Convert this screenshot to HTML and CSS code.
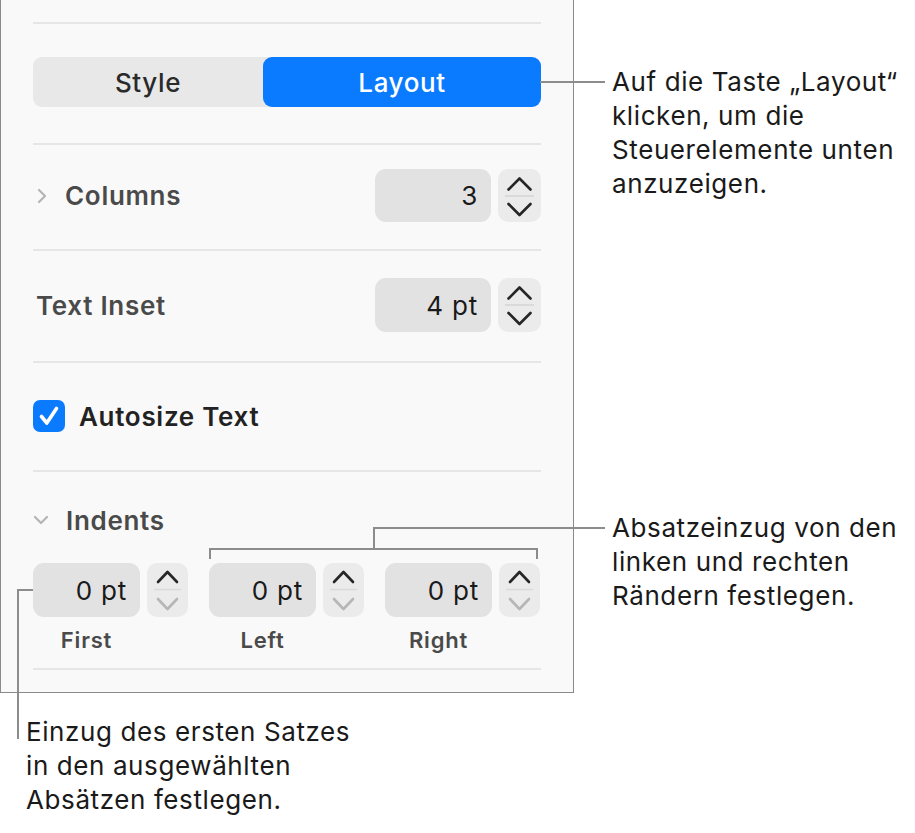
FILE: index.html
```html
<!DOCTYPE html>
<html lang="de">
<head>
<meta charset="utf-8">
<title>Layout inspector</title>
<link rel="stylesheet" href="styles.css">
</head>
<body>
<div class="page">
  <div class="panel">
    <div class="sep sep-top"></div>
    <div class="segmented">
      <div class="seg seg-style">Style</div>
      <div class="seg seg-active">Layout</div>
    </div>
    <div class="sep sep-a"></div>
    <div class="row row-columns">
      <svg class="disclosure" width="10" height="16" viewBox="0 0 10 16"><path d="M2 2 L8 8 L2 14" fill="none" stroke="#b4b4b4" stroke-width="2.2" stroke-linecap="round" stroke-linejoin="round"/></svg>
      <span class="label">Columns</span>
      <div class="spin">
        <div class="field">3</div>
        <div class="stepper">
          <svg width="43" height="53" viewBox="0 0 43 53"><path d="M10.5 20.5 L21.5 9.5 L32.5 20.5" fill="none" stroke="#262626" stroke-width="2.6" stroke-linecap="round" stroke-linejoin="round"/><line x1="7" y1="27" x2="36" y2="27" stroke="#d4d4d4" stroke-width="1.5"/><path d="M10.5 35 L21.5 46 L32.5 35" fill="none" stroke="#262626" stroke-width="2.6" stroke-linecap="round" stroke-linejoin="round"/></svg>
        </div>
      </div>
    </div>
    <div class="sep sep-b"></div>
    <div class="row row-inset">
      <span class="label label-inset">Text Inset</span>
      <div class="spin">
        <div class="field">4 pt</div>
        <div class="stepper">
          <svg width="43" height="54" viewBox="0 0 43 54"><path d="M10.5 20.5 L21.5 9.5 L32.5 20.5" fill="none" stroke="#262626" stroke-width="2.6" stroke-linecap="round" stroke-linejoin="round"/><line x1="7" y1="27" x2="36" y2="27" stroke="#d4d4d4" stroke-width="1.5"/><path d="M10.5 35 L21.5 46 L32.5 35" fill="none" stroke="#262626" stroke-width="2.6" stroke-linecap="round" stroke-linejoin="round"/></svg>
        </div>
      </div>
    </div>
    <div class="sep sep-c"></div>
    <div class="row row-check">
      <span class="checkbox">
        <svg width="32" height="32" viewBox="0 0 32 32"><path d="M8.5 16.5 L13.8 23 L23.5 8.5" fill="none" stroke="#fff" stroke-width="3.6" stroke-linecap="round" stroke-linejoin="round"/></svg>
      </span>
      <span class="label label-strong">Autosize Text</span>
    </div>
    <div class="sep sep-d"></div>
    <div class="indents-head">
      <svg class="disclosure-down" width="16" height="10" viewBox="0 0 16 10"><path d="M2 2 L8 8 L14 2" fill="none" stroke="#b4b4b4" stroke-width="2.2" stroke-linecap="round" stroke-linejoin="round"/></svg>
      <span class="label">Indents</span>
    </div>
    <div class="indents">
      <div class="indent">
        <div class="spin spin-small">
          <div class="field field-small">0 pt</div>
          <div class="stepper stepper-small">
            <svg width="41" height="54" viewBox="0 0 41 54"><path d="M11 19 L20.5 9 L30 19" fill="none" stroke="#262626" stroke-width="2.6" stroke-linecap="round" stroke-linejoin="round"/><line x1="7" y1="26.5" x2="34" y2="26.5" stroke="#dadada" stroke-width="1.5"/><path d="M11 36 L20.5 46 L30 36" fill="none" stroke="#b6b6b6" stroke-width="2.6" stroke-linecap="round" stroke-linejoin="round"/></svg>
          </div>
        </div>
        <div class="indent-label">First</div>
      </div>
      <div class="indent">
        <div class="spin spin-small">
          <div class="field field-small">0 pt</div>
          <div class="stepper stepper-small">
            <svg width="41" height="54" viewBox="0 0 41 54"><path d="M11 19 L20.5 9 L30 19" fill="none" stroke="#262626" stroke-width="2.6" stroke-linecap="round" stroke-linejoin="round"/><line x1="7" y1="26.5" x2="34" y2="26.5" stroke="#dadada" stroke-width="1.5"/><path d="M11 36 L20.5 46 L30 36" fill="none" stroke="#b6b6b6" stroke-width="2.6" stroke-linecap="round" stroke-linejoin="round"/></svg>
          </div>
        </div>
        <div class="indent-label">Left</div>
      </div>
      <div class="indent">
        <div class="spin spin-small">
          <div class="field field-small">0 pt</div>
          <div class="stepper stepper-small">
            <svg width="41" height="54" viewBox="0 0 41 54"><path d="M11 19 L20.5 9 L30 19" fill="none" stroke="#262626" stroke-width="2.6" stroke-linecap="round" stroke-linejoin="round"/><line x1="7" y1="26.5" x2="34" y2="26.5" stroke="#dadada" stroke-width="1.5"/><path d="M11 36 L20.5 46 L30 36" fill="none" stroke="#b6b6b6" stroke-width="2.6" stroke-linecap="round" stroke-linejoin="round"/></svg>
          </div>
        </div>
        <div class="indent-label">Right</div>
      </div>
    </div>
    <div class="sep sep-e"></div>
  </div>

  <svg class="leaders" width="915" height="833" viewBox="0 0 915 833">
    <g fill="none" stroke="#8c8c8c" stroke-width="2">
      <path d="M540 82 H605"/>
      <path d="M210 559 V549 H537 V559"/>
      <path d="M374 549 V528 H605"/>
      <path d="M33 590 H18 V739"/>
    </g>
  </svg>

  <p class="note note-layout">Auf die Taste „Layout“<br>klicken, um die<br>Steuerelemente unten<br>anzuzeigen.</p>
  <p class="note note-margins">Absatzeinzug von den<br>linken und rechten<br>Rändern festlegen.</p>
  <p class="note note-first">Einzug des ersten Satzes<br>in den ausgewählten<br>Absätzen festlegen.</p>
</div>
</body>
</html>
```
FILE: styles.css
```css
* { box-sizing: border-box; }

html, body {
  margin: 0;
  padding: 0;
  background: #ffffff;
}

body {
  font-family: Inter, "Noto Sans", "Liberation Sans", sans-serif;
  color: #1d1d1f;
}

.page {
  position: relative;
  width: 915px;
  height: 833px;
  overflow: hidden;
}

.panel {
  width: 574px;
  height: 693px;
  background: #f9f9f9;
  border-left: 1px solid #8a8a8a;
  border-right: 1px solid #8a8a8a;
  border-bottom: 1px solid #8a8a8a;
  padding: 0 32px;
  display: flex;
  flex-direction: column;
}

.sep {
  height: 2px;
  background: #e6e6e6;
  flex: none;
}
.sep-top { margin-top: 22px; }
.sep-a { margin-top: 36px; }
.sep-b { margin-top: 27px; }
.sep-c { margin-top: 29px; }
.sep-d { margin-top: 38px; }
.sep-e { margin-top: 16px; }

/* segmented control */
.segmented {
  margin-top: 33px;
  height: 50px;
  display: flex;
  background: #e8e8e8;
  border-radius: 9px;
}
.seg {
  display: flex;
  align-items: center;
  justify-content: center;
  font-size: 26px;
  letter-spacing: 0.6px;
  font-weight: 500;
  color: #2a2a2a;
}
.seg-style { width: 230px; }
.seg-active {
  flex: 1;
  background: #0a7aff;
  color: #ffffff;
  border-radius: 9px;
}

/* rows */
.row {
  display: flex;
  align-items: center;
}
.row-columns { margin-top: 24px; height: 53px; }
.row-inset { margin-top: 27px; height: 54px; }
.row-check { margin-top: 37px; height: 32px; }

.label {
  font-size: 26px;
  letter-spacing: 0.7px;
  font-weight: 600;
  color: #4a4a4a;
}
.label-inset { margin-left: 3px; }
.label-strong { color: #222222; margin-left: 14px; }

.disclosure { margin-left: 4px; margin-right: 18px; flex: none; }
.disclosure-down { margin-left: 0; margin-right: 17px; flex: none; }

.spin {
  margin-left: auto;
  display: flex;
  gap: 7px;
  height: 100%;
}
.field {
  width: 116px;
  height: 100%;
  background: #e2e2e2;
  border-radius: 11px;
  display: flex;
  align-items: center;
  justify-content: flex-end;
  padding-right: 13px;
  font-size: 26px;
  letter-spacing: 0.8px;
  color: #1a1a1a;
}
.stepper {
  width: 43px;
  height: 100%;
  background: #ebebeb;
  border-radius: 10px;
}
.stepper svg { display: block; }

.checkbox {
  width: 32px;
  height: 32px;
  border-radius: 7px;
  background: #0a7aff;
  flex: none;
}
.checkbox svg { display: block; }

/* indents */
.indents-head {
  margin-top: 33px;
  height: 30px;
  display: flex;
  align-items: center;
}
.indents {
  margin-top: 28px;
  display: flex;
  gap: 21px;
}
.indent {
  display: flex;
  flex-direction: column;
  width: 155px;
}
.spin-small {
  margin-left: 0;
  height: 54px;
}
.field-small { width: 107px; }
.stepper-small { width: 41px; }
.indent-label {
  width: 107px;
  margin-top: 11px;
  height: 24px;
  line-height: 24px;
  text-align: center;
  font-size: 22px;
  letter-spacing: 0.8px;
  font-weight: 600;
  color: #4a4a4a;
}

/* annotations */
.leaders {
  position: absolute;
  left: 0;
  top: 0;
  pointer-events: none;
}

.note {
  position: absolute;
  margin: 0;
  font-size: 26px;
  line-height: 34px;
  letter-spacing: 0.6px;
  color: #1a1a1a;
  white-space: nowrap;
}
.note-layout { left: 612px; top: 65px; }
.note-margins { left: 612px; top: 511px; }
.note-first { left: 26px; top: 715px; }
```
